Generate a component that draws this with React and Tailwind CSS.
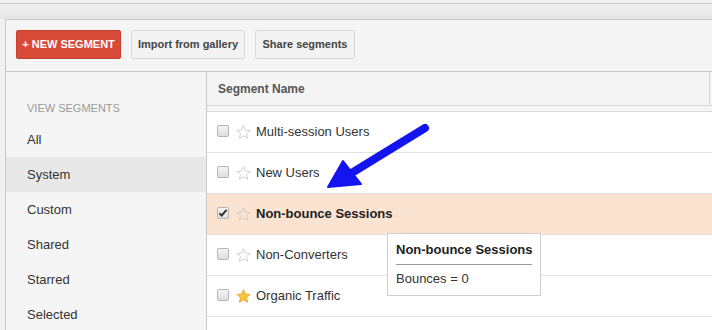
import React from 'react';

const rows = [
  { name: 'Multi-session Users' },
  { name: 'New Users' },
  { name: 'Non-bounce Sessions', checked: true, bold: true, active: true },
  { name: 'Non-Converters' },
  { name: 'Organic Traffic', starred: true },
  { name: '' },
];

const sideItems = ['All', 'System', 'Custom', 'Shared', 'Starred', 'Selected'];

function Star({ filled }) {
  return (
    <svg width="17" height="16" viewBox="0 0 24 24" className="shrink-0">
      <path
        d="M12 2.5l2.9 6.6 7.1.6-5.4 4.7 1.6 7-6.2-3.7-6.2 3.7 1.6-7L2 9.7l7.1-.6z"
        fill={filled ? '#f7c440' : 'none'}
        stroke={filled ? '#eaa92b' : '#c8c8c8'}
        strokeWidth="1.3"
        strokeLinejoin="round"
      />
    </svg>
  );
}

function Checkbox({ checked }) {
  return (
    <div className="w-[12px] h-[12px] rounded-[2px] border border-[#b4b4b4] bg-gradient-to-b from-[#f4f4f4] to-[#dedede] shrink-0 flex items-center justify-center">
      {checked && (
        <svg width="10" height="10" viewBox="0 0 10 10">
          <path d="M1.5 5.2l2.2 2.3L8.6 1.8" fill="none" stroke="#333" strokeWidth="2" />
        </svg>
      )}
    </div>
  );
}

export default function App() {
  return (
    <div className="relative w-[712px] h-[330px] overflow-hidden bg-[#f1f1f1] font-['Liberation_Sans',Arial,sans-serif] text-[#333]">
      <div className="h-[3px] bg-[#f3f3f3]" />
      <div className="h-[16px] border-t border-[#c8c8c8] bg-gradient-to-b from-[#f0f0f0] to-[#e6e6e6]" />
      <div className="ml-[5px] border-t border-l border-[#c8c8c8] bg-[#f5f5f5]">
        <div className="h-[52px] flex items-start gap-[10px] pl-[10px] pt-[10px] border-b border-[#c8c8c8]">
          <button className="h-[29px] w-[105px] rounded-[2px] border border-[#c6402f] bg-[#d84a38] text-white text-[11px] font-bold">
            + NEW SEGMENT
          </button>
          <button className="h-[29px] w-[114px] rounded-[2px] border border-[#d8d8d8] bg-[#f3f3f3] text-[#444] text-[11px] font-bold">
            Import from gallery
          </button>
          <button className="h-[29px] w-[100px] rounded-[2px] border border-[#d8d8d8] bg-[#f3f3f3] text-[#444] text-[11px] font-bold">
            Share segments
          </button>
        </div>
        <div className="flex h-[260px]">
          <div className="w-[201px] shrink-0 border-r border-[#c8c8c8] pt-[28px]">
            <div className="pl-[21px] h-[16px] leading-[16px] text-[11px] text-[#999] uppercase">View segments</div>
            <div className="mt-[6px]">
              {sideItems.map((s) => (
                <div
                  key={s}
                  className={`h-[35px] flex items-center pl-[21px] text-[13px] text-[#333] ${s === 'System' ? 'bg-[#e8e8e8]' : ''}`}
                >
                  {s}
                </div>
              ))}
            </div>
          </div>
          <div className="flex-1 flex flex-col min-h-0">
            <div className="h-[34px] shrink-0 flex border-b border-[#d6d6d6]">
              <div className="flex-1 flex items-center pl-[11px] text-[12px] font-bold text-[#555] border-r border-[#d6d6d6]">
                Segment Name
              </div>
              <div className="w-[2px]" />
            </div>
            <div className="h-[5px] shrink-0" />
            <div className="border-t border-[#dcdcdc] bg-white shrink-0">
              {rows.map((r, i) => (
                <div
                  key={i}
                  className={`h-[41px] flex items-center pl-[10px] border-b border-[#e2e2e2] ${r.active ? 'bg-[#fbe3d2]' : 'bg-white'}`}
                >
                  <div className="-mt-[2px]">
                    <Checkbox checked={r.checked} />
                  </div>
                  <div className="ml-[6px] -mt-[1px]">
                    <Star filled={r.starred} />
                  </div>
                  {r.name && (
                    <span className={`ml-[4px] text-[13px] ${r.bold ? 'font-bold text-[#222]' : 'text-[#333]'}`}>{r.name}</span>
                  )}
                </div>
              ))}
            </div>
          </div>
        </div>
      </div>

      <div className="absolute left-[387px] top-[233px] w-[154px] h-[63px] bg-white border border-[#cdcdcd] px-[8px] pt-[8px] whitespace-nowrap">
        <div className="text-[13px] font-bold text-[#222] leading-[16px]">Non-bounce Sessions</div>
        <div className="mt-[6px] h-px bg-[#999]" />
        <div className="mt-[6px] text-[13px] text-[#333] leading-[16px]">Bounces = 0</div>
      </div>

      <svg className="absolute left-0 top-0 pointer-events-none" width="712" height="330">
        <line x1="425" y1="128" x2="350" y2="174" stroke="#1414f0" strokeWidth="8" strokeLinecap="round" />
        <path d="M328 187 L343 161 L361 184 Z" fill="#1414f0" stroke="#1414f0" strokeWidth="2" strokeLinejoin="round" />
      </svg>
    </div>
  );
}
